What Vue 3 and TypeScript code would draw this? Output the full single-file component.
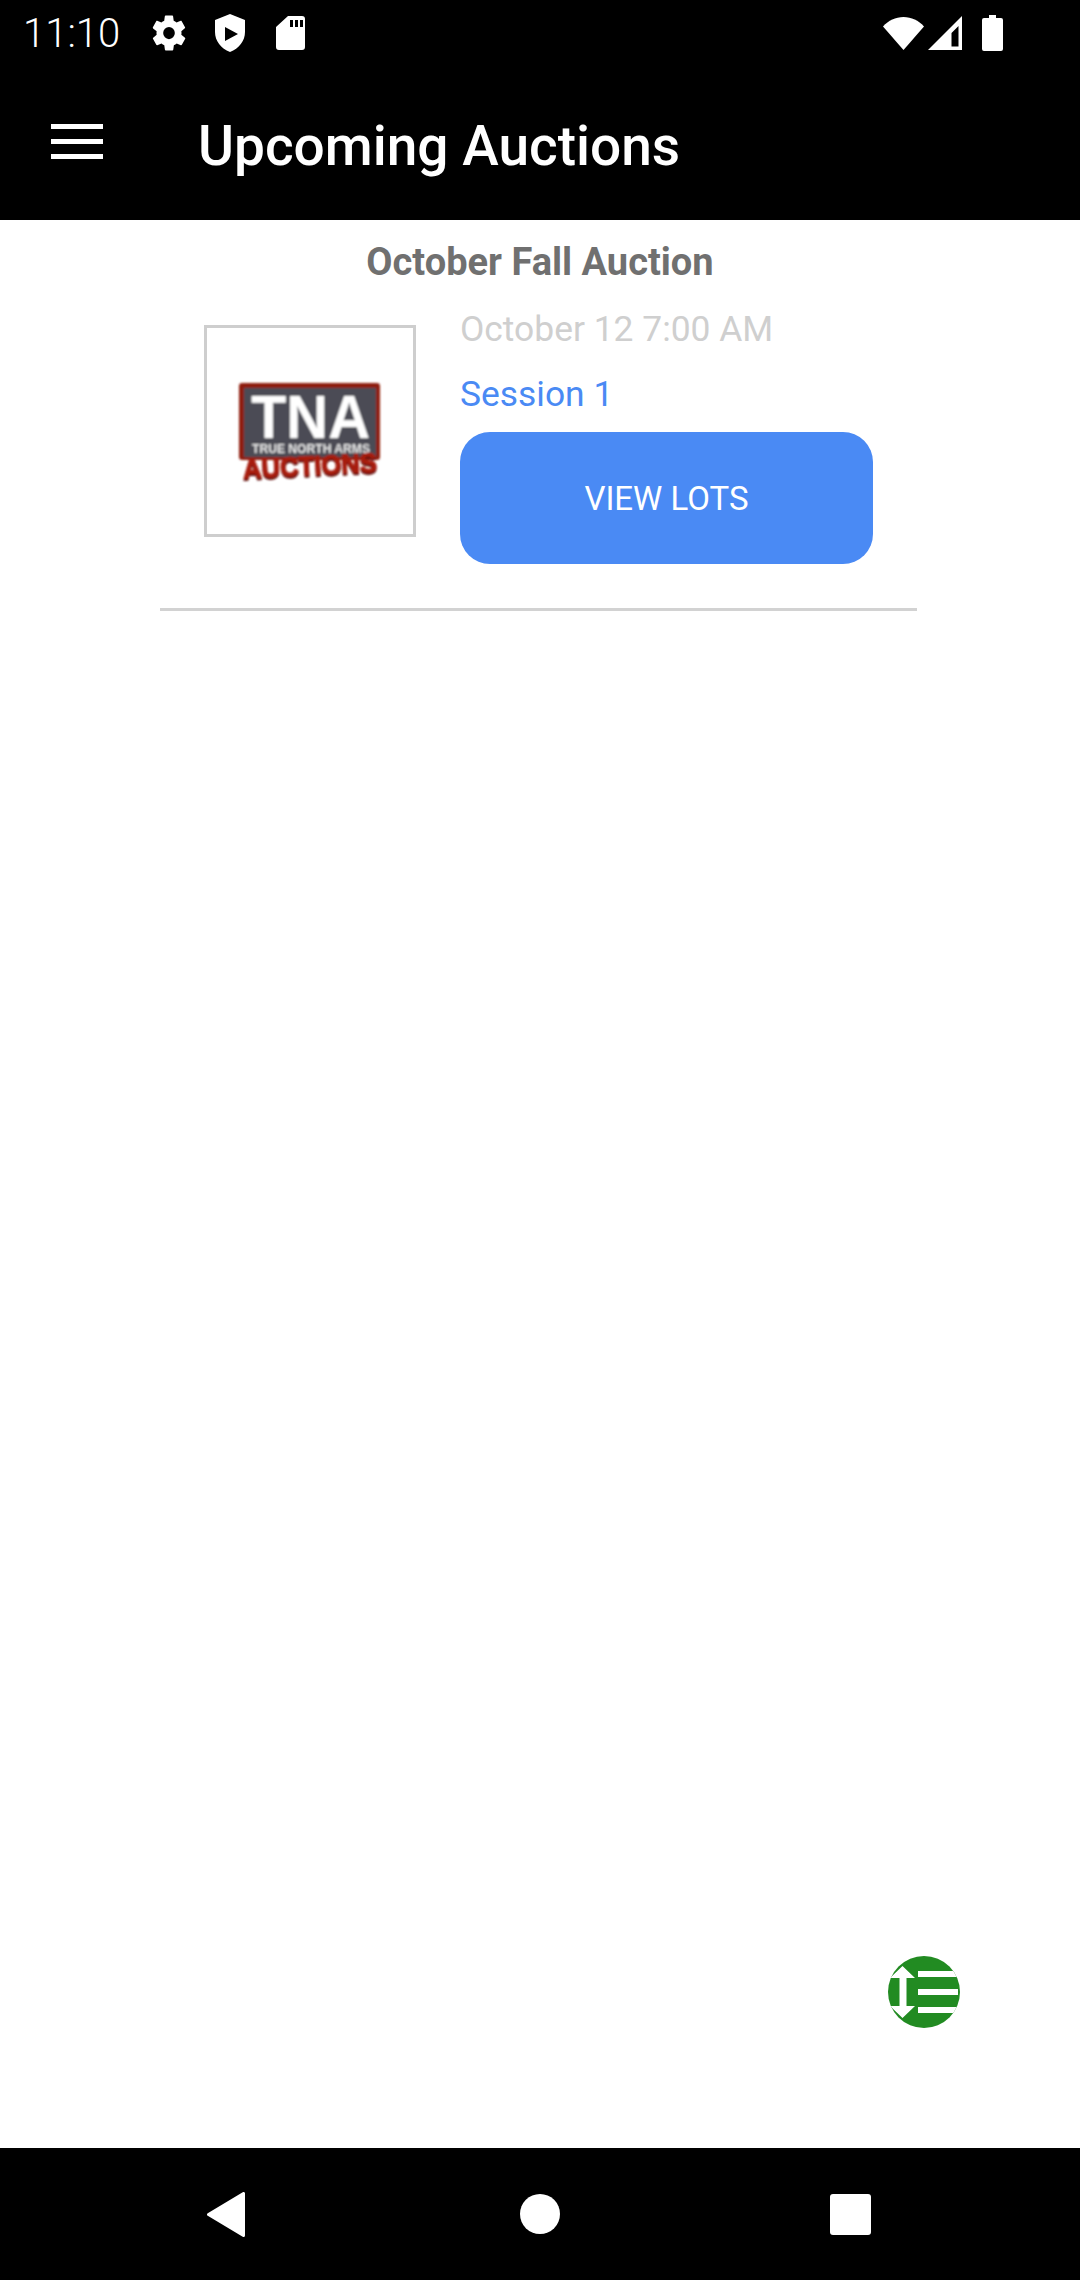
<script setup lang="ts">
const title = 'Upcoming Auctions';
const auction = {
  name: 'October Fall Auction',
  date: 'October 12 7:00 AM',
  session: 'Session 1',
};
</script>

<template>
  <div class="page">
    <div class="status-bar">
      <span class="clock">11:10</span>
      <!-- gear -->
      <svg class="ic-gear" width="40" height="42" viewBox="0 0 24 24" fill="#fff" preserveAspectRatio="none">
        <path d="M19.4 13c.04-.3.1-.65.1-1s-.06-.7-.1-1l2.1-1.65c.2-.15.25-.42.12-.64l-2-3.46c-.12-.22-.4-.3-.6-.22l-2.5 1c-.52-.4-1.08-.73-1.7-.98l-.37-2.65A.5.5 0 0 0 14 2h-4a.5.5 0 0 0-.5.42l-.37 2.65c-.62.25-1.18.58-1.7.98l-2.5-1c-.22-.08-.48 0-.6.22l-2 3.46c-.13.22-.07.49.12.64L4.6 11c-.04.3-.1.65-.1 1s.06.7.1 1l-2.1 1.65c-.2.15-.25.42-.12.64l2 3.46c.12.22.4.3.6.22l2.5-1c.52.4 1.08.73 1.7.98l.37 2.65c.04.24.25.42.5.42h4c.25 0 .46-.18.5-.42l.37-2.65c.62-.25 1.18-.58 1.7-.98l2.5 1c.22.08.48 0 .6-.22l2-3.46c.13-.22.07-.49-.12-.64L19.4 13zM12 15.5a3.500 3.500 0 1 1 0-7 3.500 3.500 0 0 1 0 7z" />
      </svg>
      <!-- shield with play -->
      <svg class="ic-shield" width="32" height="38" viewBox="0 0 32 38">
        <path fill="#fff" fill-rule="evenodd" d="M16 0 31 6v12c0 9-6 16.500-15 20C7 34.500 1 27 1 18V6L16 0zM11 13v14l13-7-13-7z" />
      </svg>
      <!-- sd card -->
      <svg class="ic-sd" width="29" height="34" viewBox="0 0 29 34">
        <path fill="#fff" fill-rule="evenodd" d="M12 0h14a3 3 0 0 1 3 3v28a3 3 0 0 1-3 3H3a3 3 0 0 1-3-3V11L12 0zM14 4v7h3V4h-3zm5 0v7h3V4h-3zm5 0v7h3V4h-3z" />
      </svg>
      <div class="status-right">
        <!-- wifi -->
        <svg class="ic-wifi" width="41" height="33" viewBox="0 0 41 33">
          <path fill="#fff" d="M20.500 33 0 9.500C5.500 3.500 12.500 0 20.500 0S35.500 3.500 41 9.500L20.500 33z" />
        </svg>
        <!-- signal -->
        <svg class="ic-signal" width="34" height="34" viewBox="0 0 34 34">
          <path fill="#fff" fill-rule="evenodd" d="M34 0v34H0L34 0zM30.500 30.500V10l-7 7v13.500h7z" />
        </svg>
        <!-- battery -->
        <svg class="ic-battery" width="21" height="36" viewBox="0 0 21 36">
          <path fill="#fff" d="M7 0h7v3h5a2 2 0 0 1 2 2v29a2 2 0 0 1-2 2H2a2 2 0 0 1-2-2V5a2 2 0 0 1 2-2h5V0z" />
        </svg>
      </div>
    </div>

    <header class="toolbar">
      <div class="menu-icon">
        <span></span>
        <span></span>
        <span></span>
      </div>
      <h1 class="toolbar-title">{{ title }}</h1>
    </header>

    <main class="content">
      <h2 class="auction-name">{{ auction.name }}</h2>
      <div class="auction-row">
        <div class="thumb">
          <!-- TNA logo, blurred like the scaled bitmap -->
          <svg class="logo" width="146" height="108" viewBox="0 0 146 108">
            <defs>
              <filter id="soft" x="-5%" y="-5%" width="110%" height="110%">
                <feGaussianBlur stdDeviation="0.8" />
              </filter>
            </defs>
            <g filter="url(#soft)">
              <rect x="2" y="2" width="141" height="77" rx="3" fill="#8e1c10" />
              <rect x="7" y="7" width="132" height="69" fill="#4b4c55" />
              <text x="73.500" y="57" class="logo-tna" text-anchor="middle" textLength="119" lengthAdjust="spacingAndGlyphs">TNA</text>
              <text x="74" y="72" class="logo-sub" text-anchor="middle" textLength="118" lengthAdjust="spacingAndGlyphs">TRUE NORTH ARMS</text>
              <text x="73" y="96" class="logo-auc logo-auc-shadow" text-anchor="middle" textLength="134" lengthAdjust="spacingAndGlyphs" transform="rotate(-3 73 86)">AUCTIONS</text>
              <text x="73" y="94" class="logo-auc" text-anchor="middle" textLength="134" lengthAdjust="spacingAndGlyphs" transform="rotate(-3 73 86)">AUCTIONS</text>
            </g>
          </svg>
        </div>
        <div class="details">
          <div class="date">{{ auction.date }}</div>
          <div class="session">{{ auction.session }}</div>
          <button class="view-btn" type="button">VIEW LOTS</button>
        </div>
      </div>
      <div class="divider"></div>

      <div class="fab">
        <svg width="72" height="72" viewBox="0 0 72 72">
          <defs>
            <clipPath id="fab-clip"><circle cx="36" cy="36" r="36" /></clipPath>
          </defs>
          <circle cx="36" cy="36" r="36" fill="#228b22" />
          <g clip-path="url(#fab-clip)" fill="#fff">
            <rect x="30" y="15" width="40" height="6" />
            <rect x="30" y="33" width="40" height="6" />
            <rect x="30" y="51" width="40" height="6" />
            <path d="M14.500 10 27 22h-8.500v28H27L14.500 62 2 50h9.500V22H2z" />
          </g>
        </svg>
      </div>
    </main>

    <nav class="nav-bar">
      <svg class="nav-back" width="38" height="45" viewBox="0 0 38 45">
        <path fill="#fff" stroke="#fff" stroke-width="3" stroke-linejoin="round" d="M36.500 1.500v42L1.500 22.500z" />
      </svg>
      <div class="nav-home"></div>
      <div class="nav-recent"></div>
    </nav>
  </div>
</template>

<style>
html,
body {
  margin: 0;
  background: #fff;
}
</style>

<style scoped>
.page {
  position: relative;
  width: 1080px;
  height: 2280px;
  display: flex;
  flex-direction: column;
  font-family: Roboto, "Liberation Sans", sans-serif;
  overflow: hidden;
}

.status-bar {
  height: 66px;
  flex: none;
  background: #000;
  display: flex;
  align-items: center;
  padding-left: 23px;
  box-sizing: border-box;
  color: #fff;
}

.clock {
  font-size: 40px;
  font-weight: 300;
  width: 126px;
}

.ic-shield {
  margin-left: 25px;
}

.ic-sd {
  margin-left: 30px;
}

.status-right {
  margin-left: auto;
  margin-right: 77px;
  display: flex;
  align-items: center;
}

.ic-signal {
  margin-left: 4px;
}

.ic-battery {
  margin-left: 20px;
}

.toolbar {
  height: 154px;
  flex: none;
  background: #000;
  display: flex;
  align-items: center;
  color: #fff;
  padding-left: 51px;
  box-sizing: border-box;
}

.menu-icon {
  width: 52px;
  display: flex;
  flex-direction: column;
  gap: 10px;
  margin-bottom: 3px;
}

.menu-icon span {
  display: block;
  height: 5px;
  background: #fff;
}

.toolbar-title {
  margin: 6px 0 0 95px;
  font-size: 55px;
  font-weight: 500;
  white-space: nowrap;
}

.content {
  flex: 1;
  background: #fff;
}

.auction-name {
  margin: 20px 0 0;
  text-align: center;
  font-size: 38px;
  font-weight: 700;
  line-height: 44px;
  color: #707070;
}

.auction-row {
  display: flex;
  align-items: flex-start;
  margin: 24px 0 0 204px;
}

.thumb {
  width: 212px;
  height: 212px;
  margin-top: 17px;
  box-sizing: border-box;
  border: 3px solid #cecece;
  background: #fff;
  display: flex;
  align-items: center;
  justify-content: center;
}

.logo {
  margin-top: 8px;
  overflow: visible;
}

.logo-tna {
  font-family: "Liberation Sans", sans-serif;
  font-weight: 700;
  font-size: 62px;
  fill: #fff;
}

.logo-sub {
  font-family: "Liberation Sans", sans-serif;
  font-weight: 700;
  font-size: 12.5px;
  fill: #e8e8e8;
}

.logo-auc {
  font-family: "Liberation Sans", sans-serif;
  font-weight: 700;
  font-size: 27px;
  fill: #a81c0e;
  stroke: #a81c0e;
  stroke-width: 1.2px;
}

.logo-auc-shadow {
  fill: #5c1008;
  stroke: #5c1008;
}

.details {
  margin-left: 44px;
  width: 413px;
  display: flex;
  flex-direction: column;
}

.date {
  font-size: 35.4px;
  line-height: 42px;
  color: #cfcfcf;
  white-space: nowrap;
}

.session {
  margin-top: 23px;
  font-size: 35.4px;
  line-height: 42px;
  color: #4a8af4;
}

.view-btn {
  margin-top: 17px;
  height: 132px;
  border: none;
  border-radius: 30px;
  background: #4a8af4;
  color: #fff;
  font-family: inherit;
  font-size: 33px;
  padding: 0;
}

.divider {
  width: 757px;
  height: 3px;
  margin: 44px 0 0 160px;
  background: #d2d2d2;
}

.fab {
  position: absolute;
  left: 888px;
  top: 1956px;
  width: 72px;
  height: 72px;
}

.nav-bar {
  height: 132px;
  flex: none;
  background: #000;
  position: relative;
  display: flex;
  align-items: center;
  box-sizing: border-box;
  padding-left: 207px;
}

.nav-home {
  width: 40px;
  height: 40px;
  border-radius: 50%;
  background: #fff;
  margin-left: 275px;
}

.nav-recent {
  width: 41px;
  height: 41px;
  border-radius: 3px;
  background: #fff;
  margin-left: 270px;
}
</style>
